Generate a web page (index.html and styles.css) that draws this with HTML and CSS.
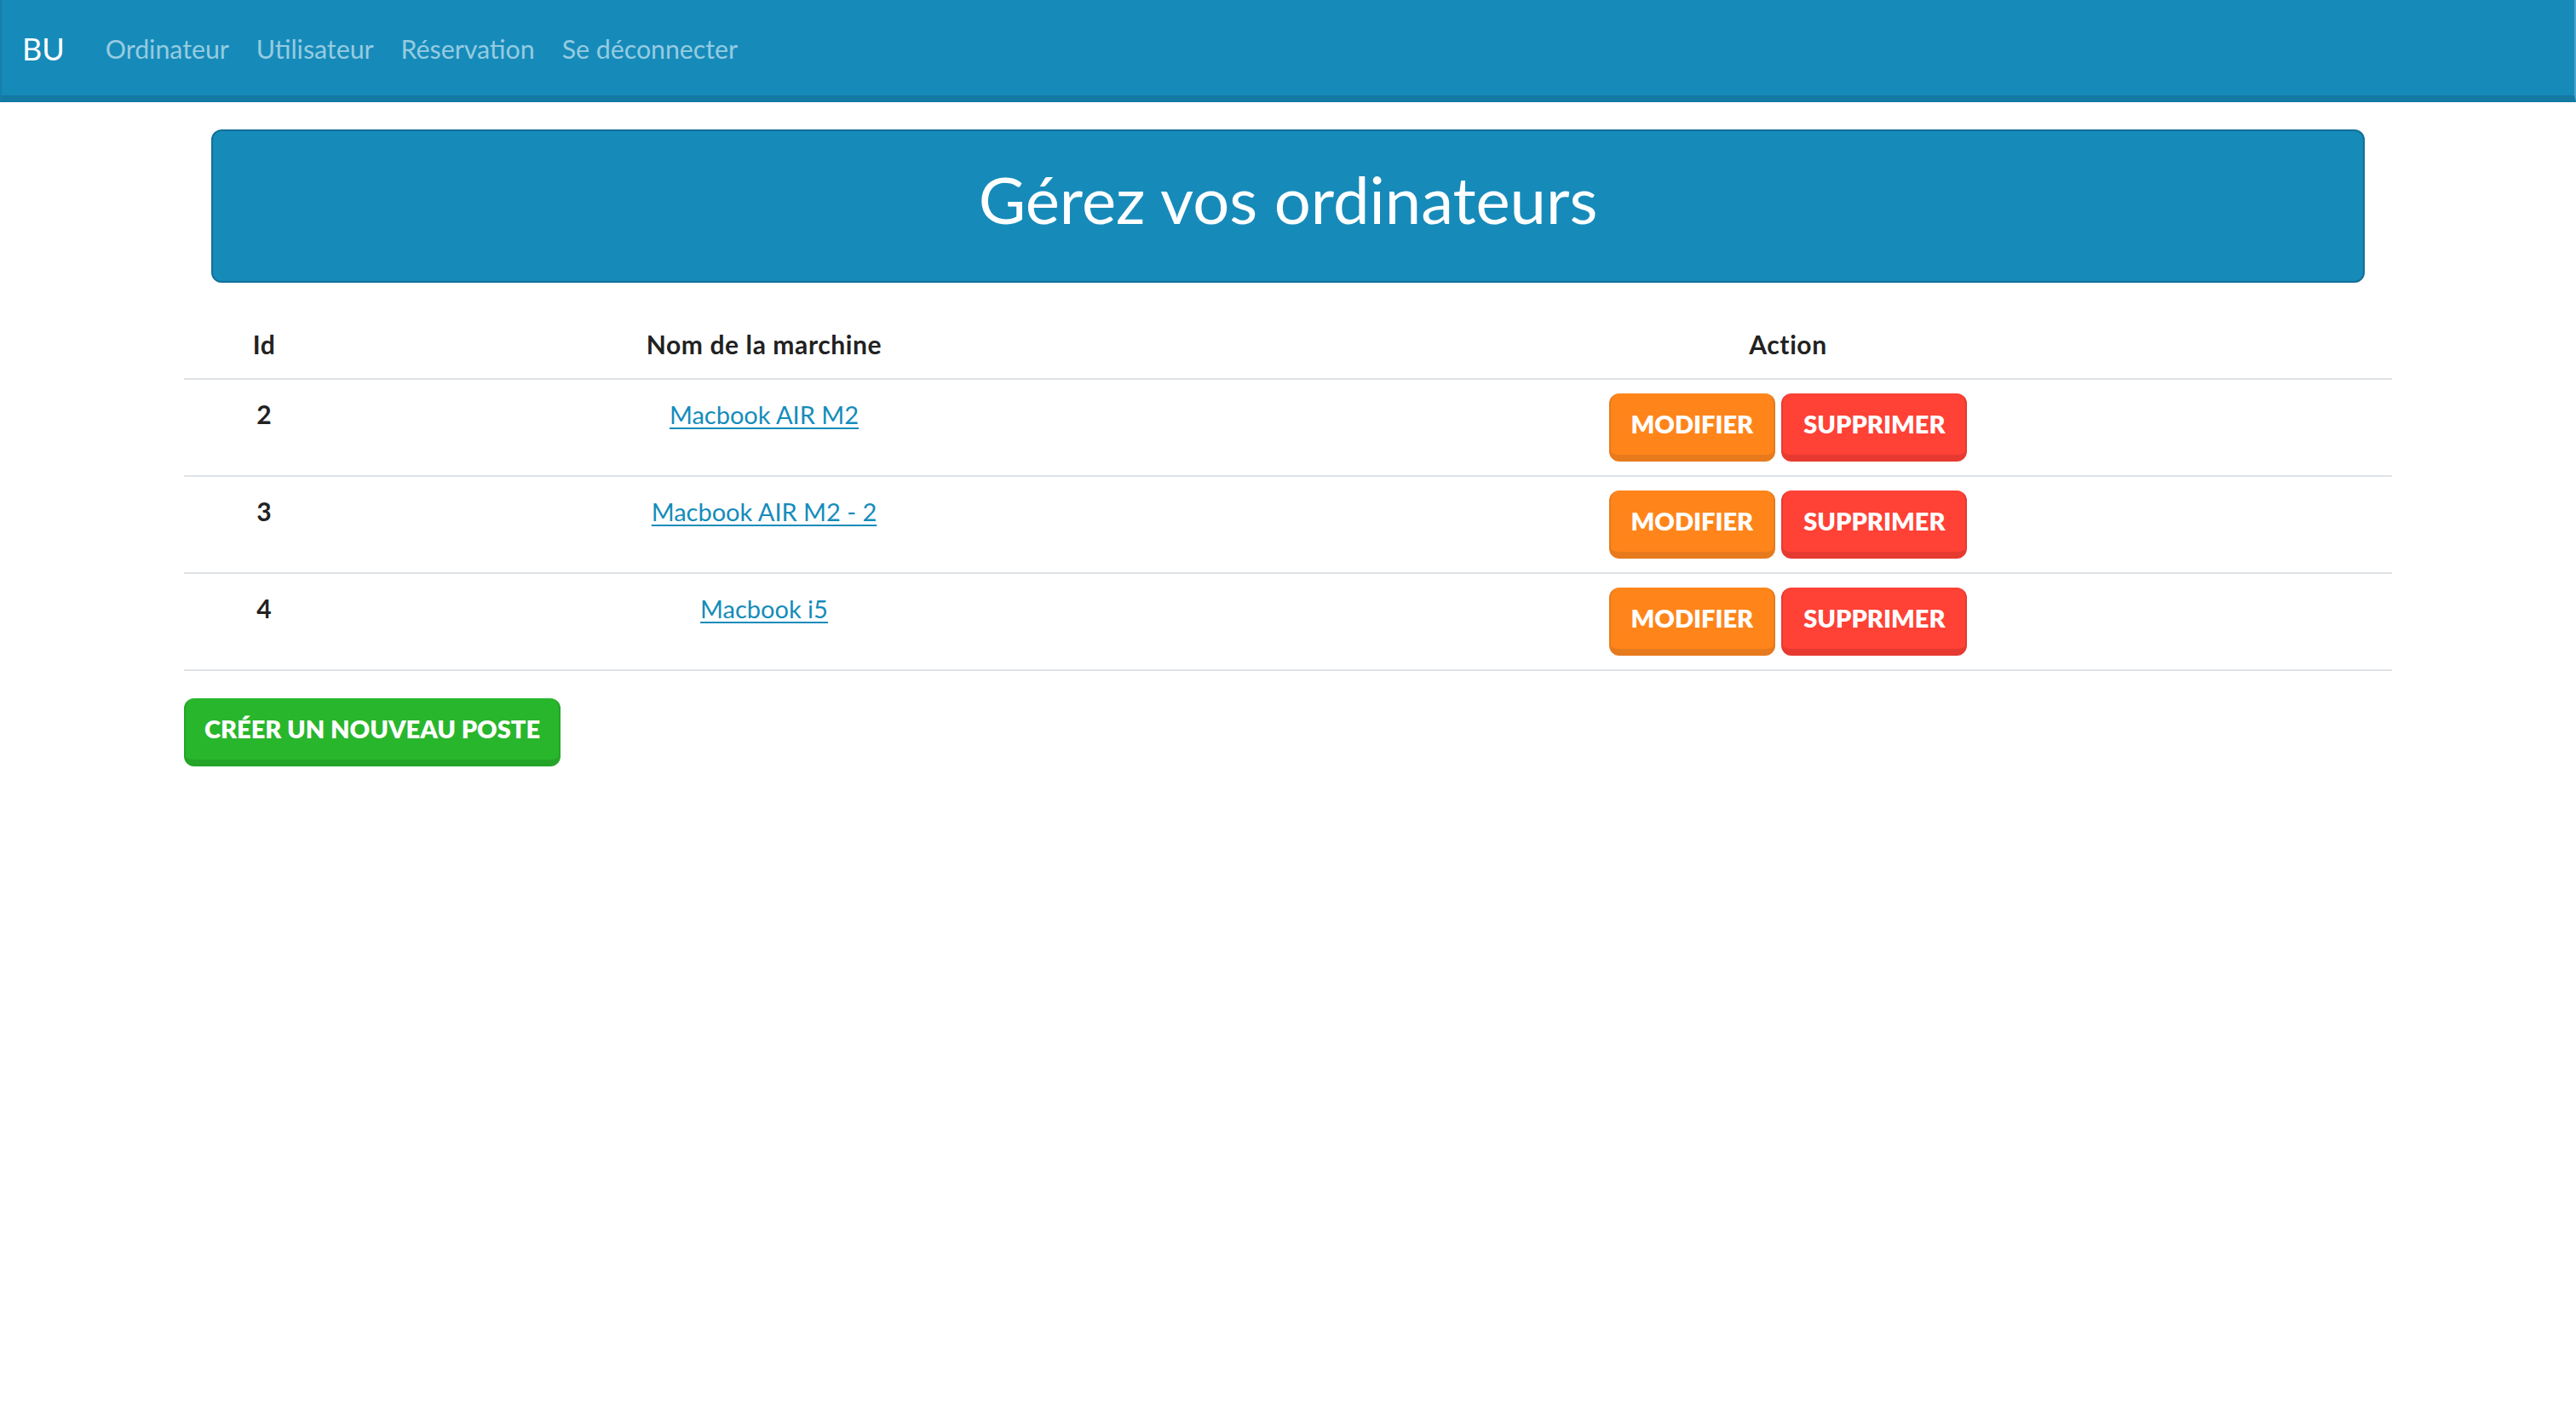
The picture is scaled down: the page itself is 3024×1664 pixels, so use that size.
FILE: index.html
```html
<!DOCTYPE html>
<html lang="fr">
<head>
<meta charset="utf-8">
<title>BU - Ordinateurs</title>
<link rel="stylesheet" href="styles.css">
</head>
<body>
<nav class="navbar">
  <div class="navbar-inner">
    <a class="brand" href="#">BU</a>
    <ul class="nav-links">
      <li><a class="nav-link" href="#">Ordinateur</a></li>
      <li><a class="nav-link" href="#">Utilisateur</a></li>
      <li><a class="nav-link" href="#">Réservation</a></li>
      <li><a class="nav-link" href="#">Se déconnecter</a></li>
    </ul>
  </div>
</nav>
<main class="container">
  <div class="hero">
    <h1 class="hero-title">Gérez vos ordinateurs</h1>
  </div>
  <table class="table">
    <colgroup>
      <col class="col-id">
      <col class="col-name">
      <col class="col-action">
    </colgroup>
    <thead>
      <tr>
        <th>Id</th>
        <th>Nom de la marchine</th>
        <th>Action</th>
      </tr>
    </thead>
    <tbody>
      <tr>
        <th class="row-id">2</th>
        <td><a class="link" href="#">Macbook AIR M2</a></td>
        <td><div class="actions"><a class="btn btn-warning" href="#">Modifier</a><a class="btn btn-danger" href="#">Supprimer</a></div></td>
      </tr>
      <tr>
        <th class="row-id">3</th>
        <td><a class="link" href="#">Macbook AIR M2 - 2</a></td>
        <td><div class="actions"><a class="btn btn-warning" href="#">Modifier</a><a class="btn btn-danger" href="#">Supprimer</a></div></td>
      </tr>
      <tr>
        <th class="row-id">4</th>
        <td><a class="link" href="#">Macbook i5</a></td>
        <td><div class="actions"><a class="btn btn-warning" href="#">Modifier</a><a class="btn btn-danger" href="#">Supprimer</a></div></td>
      </tr>
    </tbody>
  </table>
  <a class="btn btn-success" href="#">Créer un nouveau poste</a>
</main>
</body>
</html>
```
FILE: styles.css
```css
* {
  box-sizing: border-box;
}

body {
  margin: 0;
  font-family: Lato, "Liberation Sans", sans-serif;
  font-size: 30px;
  line-height: 48px;
  color: #222222;
  background: #ffffff;
}

.navbar {
  background: #168bba;
  border-bottom: 8px solid #1479a3;
  border-left: 2px solid #147fab;
  border-right: 2px solid #4aa6cb;
  height: 120px;
  padding: 17px 24px 15px;
}

.navbar-inner {
  display: flex;
  align-items: center;
  height: 80px;
}

.brand {
  color: #ffffff;
  text-decoration: none;
  font-size: 36px;
  line-height: 56px;
  margin-right: 32px;
}

.nav-links {
  display: flex;
  list-style: none;
  margin: 0;
  padding: 0;
}

.nav-link {
  display: block;
  padding: 0 16px;
  color: #96cbe0;
  text-decoration: none;
  font-size: 30.3px;
  line-height: 48px;
}

.container {
  max-width: 2640px;
  margin: 0 auto;
  padding: 0 24px;
}

.hero {
  margin: 32px 32px 0;
  background: #168bba;
  border: 2px solid #126f98;
  border-radius: 12px;
  padding: 32px 16px 48px;
  text-align: center;
}

.hero-title {
  margin: 0;
  color: #ffffff;
  font-size: 76px;
  font-weight: 400;
  line-height: 96px;
}

.table {
  width: 100%;
  margin-top: 32px;
  margin-bottom: 32px;
  border-collapse: collapse;
  table-layout: fixed;
}

.col-id {
  width: 188px;
}

.col-name {
  width: 986px;
}

.table th,
.table td {
  padding: 16px;
  text-align: center;
  vertical-align: top;
  border-bottom: 2px solid #dee2e6;
}

.table thead th {
  font-weight: 700;
  vertical-align: bottom;
  letter-spacing: 0.6px;
}

.row-id {
  font-weight: 700;
}

.link {
  color: #158cba;
  font-size: 29px;
  text-decoration: underline;
  text-underline-offset: 4px;
}

.actions {
  display: flex;
  justify-content: center;
  gap: 7px;
}

.btn {
  display: inline-block;
  height: 80px;
  padding: 0 24px;
  border-style: solid;
  border-width: 0 2px 8px 2px;
  border-radius: 12px;
  color: #ffffff;
  font-size: 29px;
  font-weight: 800;
  line-height: 72px;
  text-transform: uppercase;
  text-decoration: none;
  vertical-align: top;
}

.btn-warning {
  background: #ff851b;
  border-color: #e77a1c;
}

.btn-danger {
  background: #ff4136;
  border-color: #e63a31;
}

.btn-success {
  background: #28b62c;
  border-color: #24a428;
  padding: 0 22px;
}
```
